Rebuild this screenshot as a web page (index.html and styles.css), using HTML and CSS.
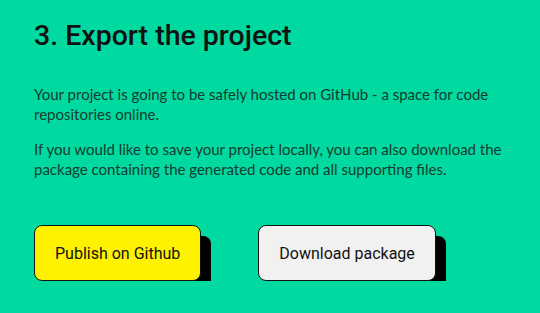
FILE: index.html
```html
<!DOCTYPE html>
<html lang="en">
<head>
    <meta charset="UTF-8">
    <meta name="viewport" content="width=device-width, initial-scale=1.0">
    <title>Export the project</title>
    <link rel="stylesheet" href="styles.css">
</head>
<body>
    <div class="step">
        <h2 class="step-title">3. Export the project</h2>

        <p class="step-text">Your project is going to be safely hosted on GitHub - a space for code repositories online.</p>
        <p class="step-text">If you would like to save your project locally, you can also download the package containing the generated code and all supporting files.</p>

        <div class="actions">
            <button class="btn btn-publish">Publish on Github</button>
            <button class="btn btn-download">Download package</button>
        </div>
    </div>
</body>
</html>
```

FILE: styles.css
```css
body {
    margin: 0;
    background-color: #00d9a0;
    font-family: 'Lato', sans-serif;
}
.step {
    padding: 18px 34px 0 34px;
}
.step-title {
    margin: 0 0 30px 0;
    font-family: 'Roboto', sans-serif;
    font-weight: 500;
    font-size: 28.5px;
    line-height: 36px;
    color: #111111;
}
.step-text {
    margin: 0 0 15px 0;
    font-size: 15px;
    line-height: 20px;
    color: #163c30;
    max-width: 480px;
}
.actions {
    display: flex;
    gap: 57px;
    margin-top: 46px;
}
.btn {
    height: 56px;
    padding: 0 20px;
    border: 1px solid #111111;
    border-radius: 8px;
    box-shadow: 10px 11px 0 #000000;
    font-family: 'Roboto', sans-serif;
    font-weight: 400;
    font-size: 16px;
    color: #111111;
}
.btn-publish {
    background-color: #fff200;
}
.btn-download {
    background-color: #f1f1f1;
}
```
